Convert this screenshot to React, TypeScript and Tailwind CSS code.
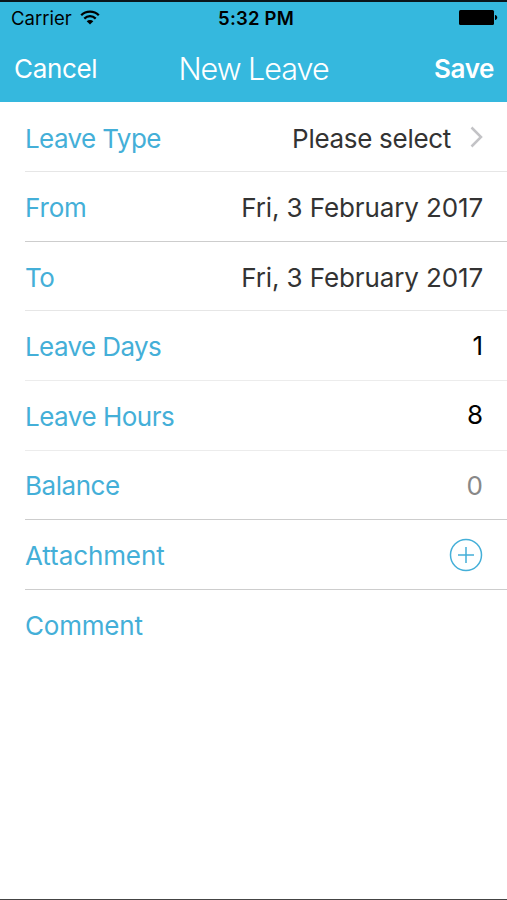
import type { ReactNode } from "react";

type RowProps = {
  label: string;
  labelClass: string;
  className: string;
  children?: ReactNode;
};

function Row({ label, labelClass, className, children }: RowProps) {
  return (
    <div className={`ml-[25px] flex shrink-0 items-center justify-between pr-6 ${className}`}>
      <span className={`whitespace-nowrap text-[#44afd8] ${labelClass}`}>{label}</span>
      {children}
    </div>
  );
}

function StatusBar() {
  return (
    <div className="grid h-8 grid-cols-3 items-center pl-[11px] pr-[9px] text-black">
      <div className="flex items-center gap-2">
        <span className="text-[18.5px] leading-8">Carrier</span>
        <svg className="-mt-0.5" width="20" height="15" viewBox="0 0 20 15" fill="none" stroke="currentColor">
          <path d="M1.2 5.2C6 .4 14 .4 18.8 5.2" strokeWidth="2.3" />
          <path d="M4.3 8.6c3.3-3.2 8.1-3.2 11.4 0" strokeWidth="2.3" />
          <path d="M10 14.5 6.7 11.3a4.7 4.7 0 0 1 6.6 0z" fill="currentColor" stroke="none" />
        </svg>
      </div>
      <span className="pl-[3px] text-center text-[18.5px] font-semibold leading-8 tracking-[0.2px]">5:32 PM</span>
      <svg className="-mt-px justify-self-end" width="39" height="15" viewBox="0 0 39 15" fill="currentColor">
        <rect width="35" height="15" rx="1.5" />
        <path d="M36 5c3 .5 3 4.500 0 5z" />
      </svg>
    </div>
  );
}

export default function App() {
  return (
    <main className="flex h-[900px] w-[507px] flex-col overflow-hidden border-b border-[#444] bg-white font-['Inter','Liberation_Sans',sans-serif] text-[26px] leading-8">
      <header className="h-[102px] shrink-0 border-t-2 border-[#0b151a] bg-[#35b8de] text-white">
        <StatusBar />
        <nav className="grid h-[69px] grid-cols-3 items-center pl-[14px] pr-[13px]">
          <span className="tracking-[-0.35px]">Cancel</span>
          <h1 className="whitespace-nowrap pr-px text-center text-[30.5px] font-[350] tracking-[-1px]">New Leave</h1>
          <span className="text-right font-semibold tracking-[-0.4px]">Save</span>
        </nav>
      </header>

      <Row label="Leave Type" labelClass="tracking-[-0.6px]" className="h-[70px] border-b border-[#e6e6e6] pt-1">
        <div className="flex items-center gap-[19px]">
          <span className="tracking-[-0.3px] text-[#333]">Please select</span>
          <svg className="-mt-1" width="13" height="22" viewBox="0 0 13 22" fill="none" stroke="#c3c3c6" strokeWidth="2.500">
            <path d="m1.500 1.500 9.500 9.500-9.500 9.500" />
          </svg>
        </div>
      </Row>
      <Row label="From" labelClass="tracking-[-0.15px]" className="h-[70px] border-b border-[#cdcdcd] pt-[2px]">
        <span className="tracking-[-0.12px] text-[#333]">Fri, 3 February 2017</span>
      </Row>
      <Row label="To" labelClass="tracking-[-0.5px]" className="h-[69px] border-b border-[#e6e6e6] pt-[3px]">
        <span className="tracking-[-0.12px] text-[#333]">Fri, 3 February 2017</span>
      </Row>
      <Row label="Leave Days" labelClass="tracking-[-0.6px]" className="h-[70px] border-b border-[#ececec] pt-[2px]">
        <span className="-mt-[2px] text-black">1</span>
      </Row>
      <Row label="Leave Hours" labelClass="tracking-[-0.5px]" className="h-[70px] border-b border-[#ececec] pt-[3px]">
        <span className="-mt-1 text-black">8</span>
      </Row>
      <Row label="Balance" labelClass="tracking-[-0.45px]" className="h-[69px] border-b border-[#cdcdcd] pt-[2px]">
        <span className="text-[#888]">0</span>
      </Row>
      <Row label="Attachment" labelClass="tracking-[-0.1px]" className="h-[70px] border-b border-[#cdcdcd] pt-[3px]">
        <svg className="-mt-[3px]" width="34" height="34" viewBox="0 0 34 34" fill="none" stroke="#44afd8" strokeWidth="1.500">
          <circle cx="17" cy="17" r="15.500" />
          <path d="M17 9v16M9 17h16" />
        </svg>
      </Row>
      <Row label="Comment" labelClass="tracking-[-0.2px]" className="h-[69px] pt-[2px]" />
    </main>
  );
}
